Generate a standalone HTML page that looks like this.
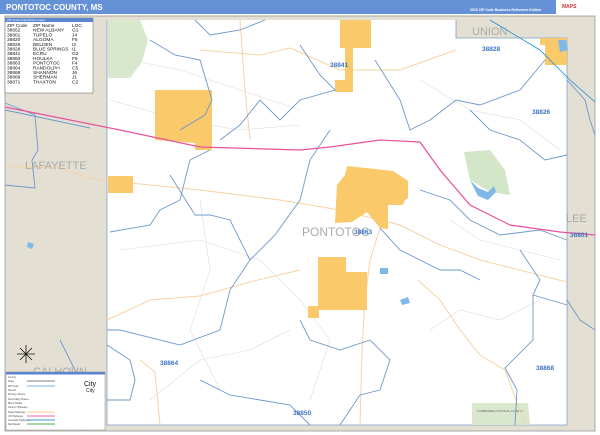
<!DOCTYPE html>
<html><head><meta charset="utf-8"><style>
html,body{margin:0;padding:0;width:600px;height:435px;overflow:hidden;background:#fff;font-family:"Liberation Sans",sans-serif}
</style></head><body>
<svg width="600" height="435" viewBox="0 0 600 435" xmlns="http://www.w3.org/2000/svg" font-family="Liberation Sans, sans-serif">
<rect x="0" y="0" width="600" height="435" fill="#fff"/>
<rect x="0" y="0" width="600" height="14" fill="#6591d6"/>
<text x="6" y="10" font-size="8" font-weight="bold" fill="#fff">PONTOTOC COUNTY, MS</text>
<text x="470" y="11" font-size="3.5" font-weight="bold" fill="#fff">2020 ZIP Code Business Reference Edition</text>
<rect x="556" y="0" width="44" height="14" fill="#fff"/>
<text x="562" y="8" font-size="5" fill="#c33" font-weight="bold">MAPS</text>
<rect x="5" y="16" width="590" height="415" fill="#e4dfd3" stroke="#999" stroke-width="0.8"/>
<polygon points="107,20 456,20 456,38 567,38 567,425 107,425" fill="#fff"/>
<polyline points="107,20 107,425 567,425 567,38 456,38 456,20" fill="none" stroke="#7fa0c8" stroke-width="0.8"/>
<polygon points="108,20 140,20 148,40 142,62 130,78 108,78" fill="#d9e8cc"/>
<polygon points="464,152 490,150 505,170 510,195 490,192 470,180" fill="#d3e6c8"/>
<polygon points="472,403 528,403 530,425 472,425" fill="#d9e8cc"/>
<text x="500" y="412" font-size="3" fill="#666" text-anchor="middle">TOMBIGBEE NATIONAL FOREST</text>
<g fill="none" stroke="#f6d3a6" stroke-width="1">
<polyline points="5,166 60,168 90,178 130,183 200,190 280,200 340,210 400,225 440,245 480,260 567,282"/>
<polyline points="200,50 260,55 290,48 340,70 400,70 456,50"/>
<polyline points="380,228 370,260 365,300 362,350 360,425"/>
<polyline points="418,280 440,300 460,330 480,355 505,370 525,425"/>
<polyline points="107,320 150,300 200,296 250,282 300,270"/>
<polyline points="140,360 155,372 160,425"/>
<polyline points="240,20 245,90 250,140"/>
</g>
<g fill="none" stroke="#ddd" stroke-width="0.6">
<polyline points="110,100 180,120 240,130 300,125"/>
<polyline points="120,250 200,240 260,260 300,300 330,340 310,400"/>
<polyline points="420,80 470,110 520,120 560,150"/>
<polyline points="150,400 200,360 250,350 290,330"/>
<polyline points="430,330 460,310 500,320 540,300"/>
<polyline points="200,200 210,270 190,330 220,390"/>
<polyline points="450,220 480,240 520,250 560,260"/>
<polyline points="130,60 180,70 240,90 300,110"/>
</g>
<g fill="#f9c96a">
<polygon points="340,20 371,20 371,48 353,48 353,92 335,92 335,80 345,80 345,48 340,48"/>
<polygon points="155,90 212,90 212,150 195,150 195,143 155,140"/>
<polygon points="108,176 133,176 133,193 108,193"/>
<polygon points="347,166 393,171 408,181 408,198 405,200 403,205 388,205 388,229 380,228 367,212 352,222 335,223 337,185 345,175"/>
<polygon points="318,257 346,257 346,272 367,272 367,310 319,310 319,318 308,318 308,306 318,306"/>
<polygon points="540,38 567,38 567,65 545,65 545,45 540,45"/>
</g>
<g fill="#7eb8e8">
<path d="M470,180 l8,8 l10,4 l6,-6 l2,6 l-8,8 l-10,-4z"/>
<path d="M558,40 l8,0 l2,10 l-8,2z"/>
<path d="M380,268 l8,0 l0,6 l-8,0z"/>
<path d="M400,300 l8,-3 l2,6 l-8,2z"/>
<path d="M28,242 l6,2 l-2,5 l-5,-2z"/>
</g>
<g fill="none" stroke="#6d98cc" stroke-width="0.9">
<polyline points="5,103 35,115 38,150 32,160 35,188 5,185"/>
<polyline points="195,20 210,35 240,30 265,20"/>
<polyline points="150,40 175,55 200,60 212,100 205,115 180,130"/>
<polyline points="5,110 90,128"/>
<polyline points="210,150 190,160 180,200 160,210 150,225 110,232"/>
<polyline points="170,175 195,215 210,215 230,220 250,260 230,290 220,330 180,345 120,330 107,330"/>
<polyline points="300,45 320,75 335,90 300,100 280,120 260,100 240,125 220,140"/>
<polyline points="330,130 310,160 300,200 275,235 250,260"/>
<polyline points="375,60 400,100 410,130 430,120 456,100 480,105 520,90 545,60"/>
<polyline points="470,110 490,130 520,140 545,160 567,155"/>
<polyline points="420,190 450,200 470,220 500,235 540,230 567,240"/>
<polyline points="380,228 400,250 420,260 440,270 460,270 480,280"/>
<polyline points="520,250 540,280 533,295 533,340 505,368 517,390 515,425"/>
<polyline points="533,295 567,305"/>
<polyline points="300,320 310,340 340,350 370,340 390,360 380,390 360,395 340,425"/>
<polyline points="107,345 130,360 135,380 130,400 107,400"/>
<polyline points="200,380 230,395 260,400 290,405 310,425"/>
<polyline points="567,80 585,100 590,120 595,135"/>
<polyline points="567,300 580,320 595,330"/>
<polyline points="60,340 80,380 85,431"/>
</g>
<polyline points="490,20 540,50 570,80 595,102" fill="none" stroke="#1b8fd3" stroke-width="0.8"/>
<polyline points="5,107 120,130 200,147 300,150 330,147 380,140 420,142 440,170 470,205 510,225 560,232 595,235" fill="none" stroke="#e8509c" stroke-width="1.2"/>
<g fill="#aaa" font-size="11">
<text x="25" y="169">LAFAYETTE</text>
<text x="472" y="35">UNION</text>
<text x="566" y="222">LEE</text>
<text x="33" y="375">CALHOUN</text>
<text x="302" y="236" font-size="12">PONTOTOC</text>
</g>
<g fill="#3c74c1" font-size="6.5" font-weight="bold">
<text x="330" y="67">38841</text>
<text x="482" y="51">38828</text>
<text x="532" y="114">38826</text>
<text x="570" y="237">38801</text>
<text x="354" y="234">38863</text>
<text x="160" y="365">38864</text>
<text x="536" y="370">38868</text>
<text x="293" y="415">38850</text>
</g>
<rect x="5" y="18" width="88" height="75" fill="#fff" stroke="#666" stroke-width="0.5"/>
<rect x="5" y="18" width="88" height="4" fill="#5b86cf"/>
<text x="7" y="21.2" font-size="3" fill="#fff">ZIP Code Index/Grid Locator</text>
<g font-size="4.8" fill="#111">
<text x="7" y="27">ZIP Code</text><text x="33" y="27">ZIP Name</text><text x="72" y="27">LOC</text>
<text x="7" y="31.7">38652</text><text x="33" y="31.7">NEW ALBANY</text><text x="72" y="31.7">G1</text>
<text x="7" y="36.4">38801</text><text x="33" y="36.4">TUPELO</text><text x="72" y="36.4">J4</text>
<text x="7" y="41.1">38820</text><text x="33" y="41.1">ALGOMA</text><text x="72" y="41.1">F5</text>
<text x="7" y="45.8">38826</text><text x="33" y="45.8">BELDEN</text><text x="72" y="45.8">I2</text>
<text x="7" y="50.5">38828</text><text x="33" y="50.5">BLUE SPRINGS</text><text x="72" y="50.5">I1</text>
<text x="7" y="55.2">38841</text><text x="33" y="55.2">ECRU</text><text x="72" y="55.2">G2</text>
<text x="7" y="59.9">38850</text><text x="33" y="59.9">HOULKA</text><text x="72" y="59.9">F6</text>
<text x="7" y="64.6">38863</text><text x="33" y="64.6">PONTOTOC</text><text x="72" y="64.6">F4</text>
<text x="7" y="69.3">38864</text><text x="33" y="69.3">RANDOLPH</text><text x="72" y="69.3">C5</text>
<text x="7" y="74">38868</text><text x="33" y="74">SHANNON</text><text x="72" y="74">J6</text>
<text x="7" y="78.7">38869</text><text x="33" y="78.7">SHERMAN</text><text x="72" y="78.7">J1</text>
<text x="7" y="83.4">38871</text><text x="33" y="83.4">THAXTON</text><text x="72" y="83.4">C2</text>
</g>
<g stroke="#111" stroke-width="0.8">
<line x1="26" y1="345" x2="26" y2="363"/><line x1="17" y1="354" x2="35" y2="354"/>
<line x1="20" y1="348" x2="32" y2="360"/><line x1="32" y1="348" x2="20" y2="360"/>
</g>
<rect x="6" y="372" width="99" height="58" fill="#fff" stroke="#888" stroke-width="0.5"/>
<rect x="6" y="372" width="99" height="2.5" fill="#5b86cf"/>
<g font-size="2.5" fill="#444">
<text x="8" y="378">County</text><text x="8" y="382">State</text><text x="8" y="387">ZIP Code</text>
<text x="8" y="391">Streets</text><text x="8" y="395">Primary Streets</text><text x="8" y="400">Secondary Streets</text>
<text x="8" y="404">Minor Roads</text><text x="8" y="408">County Highways</text><text x="8" y="413">State Highways</text>
<text x="8" y="417">US Highways</text><text x="8" y="421">Interstate Highways</text><text x="8" y="425">Rail Roads</text>
</g>
<g stroke-width="1.2">
<line x1="27" y1="381" x2="55" y2="381" stroke="#999"/>
<line x1="27" y1="386" x2="55" y2="386" stroke="#9cc0e8"/>
<line x1="27" y1="412" x2="55" y2="412" stroke="#f8d8a8"/>
<line x1="27" y1="416" x2="55" y2="416" stroke="#ee80c0"/>
<line x1="27" y1="420" x2="55" y2="420" stroke="#60a8e0"/>
<line x1="27" y1="424" x2="55" y2="424" stroke="#70c070"/>
</g>
<text x="84" y="386" font-size="7" fill="#111">City</text>
<text x="86" y="392" font-size="5" fill="#111">City</text>
</svg>
</body></html>
